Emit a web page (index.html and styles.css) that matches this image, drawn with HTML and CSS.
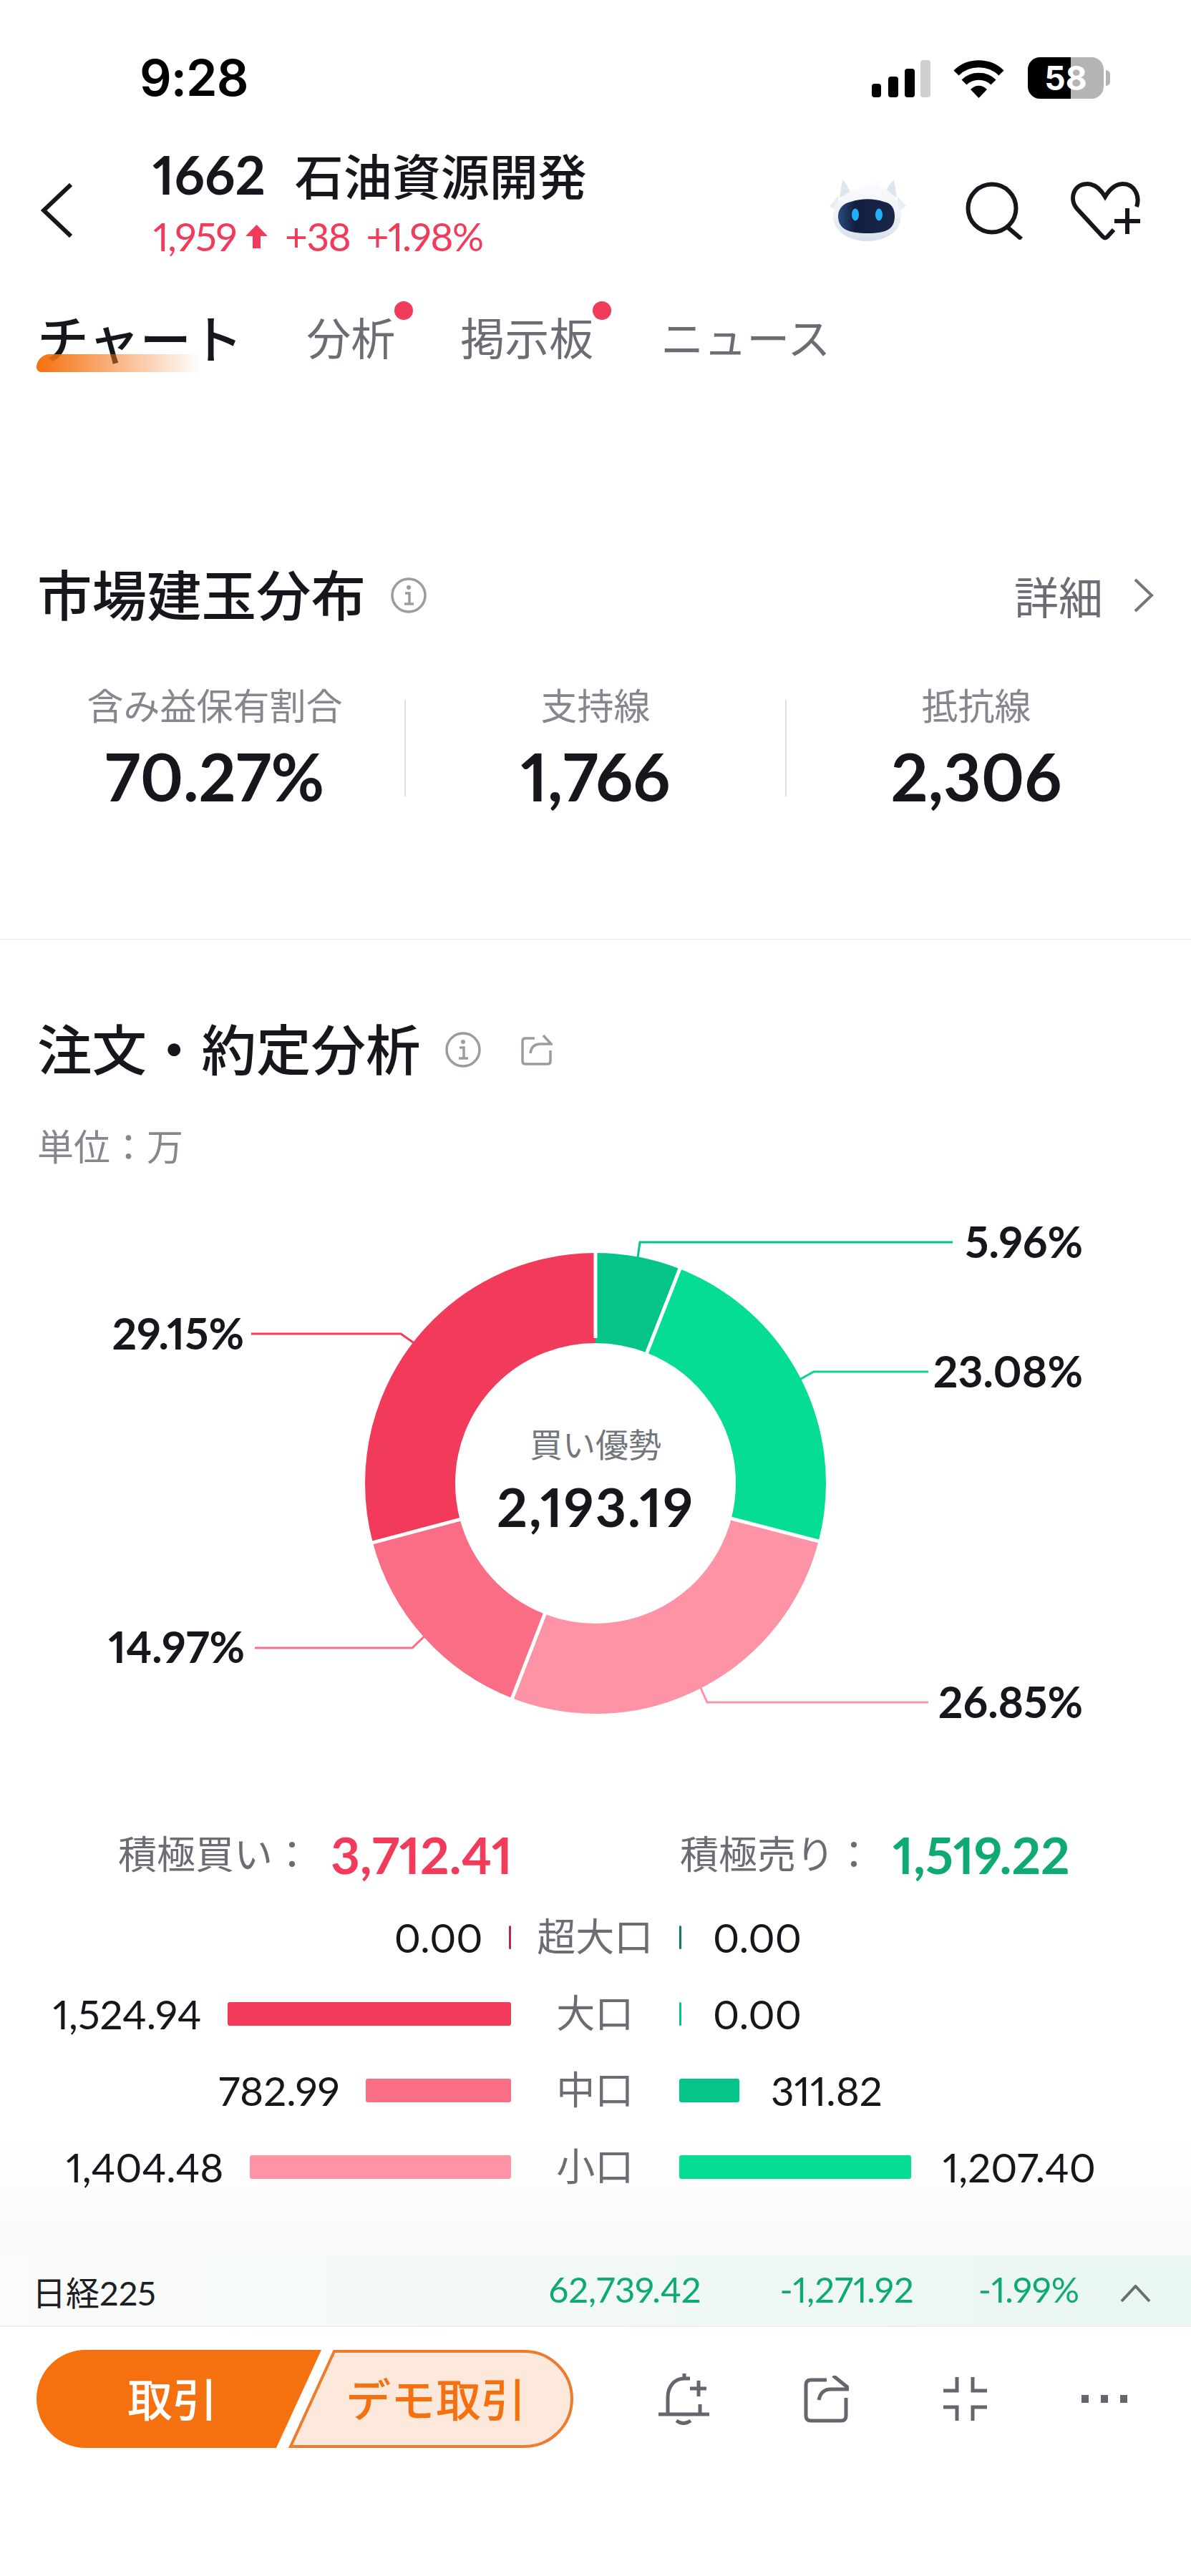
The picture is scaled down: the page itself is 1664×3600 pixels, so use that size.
FILE: index.html
```html
<!DOCTYPE html>
<html lang="ja">
<head>
<meta charset="utf-8">
<title>1662 石油資源開発</title>
<link rel="stylesheet" href="styles.css">
</head>
<body>
<div class="page">
  <header class="status">
    <div class="time">9:28</div>
    <div class="status-icons">
      <svg class="sig" width="82" height="52" viewBox="0 0 82 52"><rect x="0" y="33" width="13" height="19" rx="4"/><rect x="23" y="23" width="14" height="29" rx="4"/><rect x="46" y="12" width="14" height="40" rx="4"/><rect class="sig-off" x="68" y="0" width="14" height="52" rx="4"/></svg>
      <svg class="wifi" width="71" height="53" viewBox="0 0 71 53"><path class="wifi-arc" d="M4 18C21 1 50 1 67 18"/><path class="wifi-arc" d="M15 31C26 20 45 20 56 31"/><path d="M24 41C31 34 40 34 47 41L35.5 53Z"/></svg>
      <div class="battery">58</div>
      <div class="battery-cap"></div>
    </div>
  </header>

  <nav class="nav">
    <svg class="back" width="44" height="76" viewBox="0 0 44 76"><path d="M42 2L4 38L42 74"/></svg>
    <div class="name">
      <div class="name-line"><span class="code">1662</span><span class="cname">石油資源開発</span></div>
      <div class="price-line"><span>1,959</span><svg class="up" width="31" height="33" viewBox="0 0 31 33"><path d="M15.5 0L31 16H21V33H10V16H0Z"/></svg><span class="chg">+38</span><span class="pct">+1.98%</span></div>
    </div>
    <svg class="robot" width="107" height="89" viewBox="0 0 107 89">
      <defs>
        <linearGradient id="rb" x1="0" y1="0" x2="0" y2="1"><stop offset="0" stop-color="#fdfdff"/><stop offset="0.6" stop-color="#eef1f6"/><stop offset="1" stop-color="#d6dfeb"/></linearGradient>
        <linearGradient id="rv" x1="0" y1="0" x2="1" y2="0"><stop offset="0" stop-color="#2b4a7e"/><stop offset="0.3" stop-color="#131f3f"/><stop offset="1" stop-color="#1a2648"/></linearGradient>
      </defs>
      <path fill="#dfe5ee" d="M14 28L18 3C23 8 27 14 29 22ZM78 22C80 14 85 8 90 3L94 28Z"/>
      <path fill="#e8ecf3" d="M12 26L0 40L12 48ZM95 26L107 40L95 48Z"/>
      <path fill="url(#rb)" d="M53 12C58 10 66 6 74 0C72 4 72 8 70 12C84 18 98 30 100 52C101 74 80 89 53 89C26 89 4 74 5 52C7 30 28 16 53 12Z"/>
      <path fill="url(#rv)" d="M30 34C44 29 62 29 76 34C87 36 91 44 91 54C91 72 80 78 53 78C26 78 12 72 12 54C12 44 19 36 30 34Z"/>
      <ellipse cx="36" cy="52" rx="5" ry="8.5" fill="#21b0f5"/>
      <ellipse cx="69" cy="52" rx="5" ry="8.5" fill="#21b0f5"/>
    </svg>
    <svg class="search" width="80" height="81" viewBox="0 0 80 81"><circle cx="37" cy="37" r="33.5"/><path d="M58 63L78 80"/></svg>
    <svg class="heart" width="96" height="80" viewBox="0 0 96 80"><path d="M59 67L50 77C48 79 46 79 44 77L8 38C-4 24 3 3 22 3C33 3 41 11 47 21C53 11 61 3 72 3C88 3 96 20 91 35"/><path d="M60 55H96M78 37V73"/></svg>
  </nav>

  <div class="tabs">
    <div class="tab active">チャート</div>
    <div class="tab dot t2">分析</div>
    <div class="tab dot t3">掲示板</div>
    <div class="tab t4">ニュース</div>
  </div>

  <section class="market">
    <div class="title-row">
      <h2 class="title">市場建玉分布</h2>
      <svg class="info" width="52" height="52" viewBox="0 0 52 52"><circle cx="26" cy="26" r="23"/><circle class="i-dot" cx="26" cy="15" r="3"/><path d="M21 23H27V37M20 38H33"/></svg>
      <div class="detail">詳細<svg class="detail-arrow" width="30" height="50" viewBox="0 0 30 50"><path d="M3 3L26 25L3 47"/></svg></div>
    </div>
    <div class="stats">
      <div class="stat"><div class="stat-label">含み益保有割合</div><div class="stat-value">70.27%</div></div>
      <div class="vline"></div>
      <div class="stat"><div class="stat-label">支持線</div><div class="stat-value">1,766</div></div>
      <div class="vline"></div>
      <div class="stat"><div class="stat-label">抵抗線</div><div class="stat-value">2,306</div></div>
    </div>
  </section>

  <section class="orders">
    <div class="title-row title-row2">
      <h2 class="title">注文・約定分析</h2>
      <svg class="info info2" width="52" height="52" viewBox="0 0 52 52"><circle cx="26" cy="26" r="23"/><circle class="i-dot" cx="26" cy="15" r="3"/><path d="M21 23H27V37M20 38H33"/></svg>
      <svg class="share-small" width="44" height="44" viewBox="0 0 44 44"><path d="M19 6H6Q2 6 2 10V38Q2 42 6 42H37Q41 42 41 38V23"/><path d="M13 27Q14 15 26 14H42L31 2"/></svg>
    </div>
    <div class="unit">単位：万</div>
    <svg class="chart" width="1664" height="740" viewBox="0 1700 1664 740">
      <path class="lead" stroke="#05c48a" d="M890 1765L894 1736H1331"/>
      <path class="lead" stroke="#05d591" d="M1110 1932L1137 1917H1297"/>
      <path class="lead" stroke="#fd93a5" d="M975 2350L988 2379H1297"/>
      <path class="lead" stroke="#f23b5a" d="M590 1885L560 1864H351"/>
      <path class="lead" stroke="#f96d85" d="M600 2280L576 2303H356"/>
      <g class="ring">
        <circle stroke="#05c48a" pathLength="100" stroke-dasharray="5.96 94.04" stroke-dashoffset="0" cx="832" cy="2073" r="259"/>
        <circle stroke="#05dc94" pathLength="100" stroke-dasharray="23.08 76.92" stroke-dashoffset="-5.96" cx="832" cy="2073" r="259"/>
        <circle stroke="#fd93a5" pathLength="100" stroke-dasharray="26.85 73.15" stroke-dashoffset="-29.04" cx="832" cy="2073" r="259"/>
        <circle stroke="#f96d85" pathLength="100" stroke-dasharray="14.97 85.03" stroke-dashoffset="-55.89" cx="832" cy="2073" r="259"/>
        <circle stroke="#f23b5a" pathLength="100" stroke-dasharray="29.14 70.86" stroke-dashoffset="-70.86" cx="832" cy="2073" r="259"/>
      </g>
      <path class="seams" d="M832 1870V1745M901.5 1896.2L952 1767.7M1015.9 2120.7L1149.5 2155.3M763.3 2250.1L713.4 2378.8M648.4 2121.8L515 2157.3"/>
      <text class="pct-label" x="1513" y="1758" text-anchor="end">5.96%</text>
      <text class="pct-label" x="1513" y="1939" text-anchor="end">23.08%</text>
      <text class="pct-label" x="1513" y="2401" text-anchor="end">26.85%</text>
      <text class="pct-label" x="341" y="1886" text-anchor="end">29.15%</text>
      <text class="pct-label" x="342" y="2324" text-anchor="end">14.97%</text>
      <text class="c-label" x="832" y="2036" text-anchor="middle">買い優勢</text>
      <text class="c-value" x="832" y="2134" text-anchor="middle">2,193.19</text>
    </svg>

    <div class="summary">
      <div class="sum sum-buy"><span class="sum-label">積極買い：</span><span class="sum-value">3,712.41</span></div>
      <div class="sum sum-sell"><span class="sum-label">積極売り：</span><span class="sum-value">1,519.22</span></div>
    </div>

    <div class="rows">
      <div class="row">
        <div class="side left"><span class="num">0.00</span><i class="bar b-red0" style="width:3px"></i></div>
        <div class="row-label">超大口</div>
        <div class="side right"><i class="bar b-green0" style="width:3px"></i><span class="num">0.00</span></div>
      </div>
      <div class="row">
        <div class="side left"><span class="num">1,524.94</span><i class="bar b-red1" style="width:396px"></i></div>
        <div class="row-label">大口</div>
        <div class="side right"><i class="bar b-green1" style="width:3px"></i><span class="num">0.00</span></div>
      </div>
      <div class="row">
        <div class="side left"><span class="num">782.99</span><i class="bar b-red2" style="width:203px"></i></div>
        <div class="row-label">中口</div>
        <div class="side right"><i class="bar b-green1" style="width:84px"></i><span class="num">311.82</span></div>
      </div>
      <div class="row">
        <div class="side left"><span class="num">1,404.48</span><i class="bar b-red3" style="width:365px"></i></div>
        <div class="row-label">小口</div>
        <div class="side right"><i class="bar b-green2" style="width:324px"></i><span class="num">1,207.40</span></div>
      </div>
    </div>
  </section>

  <div class="ticker">
    <div class="t-name">日経225</div>
    <div class="t-vals"><span>62,739.42</span><span class="t-chg">-1,271.92</span><span class="t-pct">-1.99%</span></div>
    <svg class="t-arrow" width="43" height="24" viewBox="0 0 43 24"><path d="M2 23L21.5 2L41 23"/></svg>
  </div>

  <footer class="toolbar">
    <div class="trade">
      <svg class="trade-bg" width="750" height="137" viewBox="0 0 750 137"><path class="tb-l" d="M68.5 0H398L335 137H68.5A68.5 68.5 0 0 1 68.5 0Z"/><path class="tb-r" d="M416 2H681.500A66.500 66.500 0 0 1 681.500 135H355Z"/></svg>
      <span class="trade-main">取引</span>
      <span class="trade-demo">デモ取引</span>
    </div>
    <div class="tools">
      <svg width="71" height="72" viewBox="0 0 71 72"><path d="M36 0V7M44 7H36C21 7 13 20 13 33V56M58 43V56M0 57H71M25 66Q35 73 45 66"/><path d="M44 21H67M56 10V32"/></svg>
      <svg width="63" height="66" viewBox="0 0 63 66"><path d="M32 6H10Q3 6 3 13V56Q3 63 10 63H52Q59 63 59 56V31"/><path d="M21 34Q24 19 38 19H62V17L41 0"/></svg>
      <svg width="61" height="61" viewBox="0 0 61 61"><path d="M19 0V19H0M41 0V19H61M0 42H19V61M61 42H41V61"/></svg>
      <svg class="dots" width="64" height="11" viewBox="0 0 64 11"><rect width="10" height="11"/><rect x="27" width="10" height="11"/><rect x="54" width="10" height="11"/></svg>
    </div>
  </footer>
</div>
</body>
</html>
```

FILE: styles.css
```css
* { box-sizing: border-box; }
html, body { margin: 0; padding: 0; background: #fff; }
body { font-family: Lato, "Noto Sans CJK JP", sans-serif; color: #15171c; font-variant-numeric: proportional-nums; }
.page { width: 1664px; height: 3600px; overflow: hidden; background: #fff; }

/* status bar */
.status { height: 190px; padding-top: 80px; display: flex; align-items: flex-start; }
.time { margin-left: 195px; font-family: Inter, sans-serif; font-weight: 600; font-size: 70px; line-height: 58px; letter-spacing: -1px; color: #000; }
.status-icons { margin-left: auto; padding-right: 113px; display: flex; align-items: flex-start; }
.sig { margin-top: 4px; }
.sig rect { fill: #000; }
.sig .sig-off { fill: #cfcfcf; }
.wifi { margin: 4px 0 0 32px; }
.wifi-arc { fill: none; stroke: #000; stroke-width: 10; }
.battery { margin-left: 33px; width: 106px; height: 58px; border-radius: 17px; background: linear-gradient(90deg, #000 0 57%, #b4b4b4 57% 100%); color: #fff; font-family: Inter, sans-serif; font-weight: 700; font-size: 46px; line-height: 58px; text-align: center; }
.battery-cap { width: 6px; height: 22px; margin: 18px 0 0 3px; background: #b4b4b4; border-radius: 0 6px 6px 0; }

/* nav */
.nav { height: 190px; display: flex; align-items: flex-start; }
.back { margin: 66px 0 0 57px; flex: none; }
.back path { fill: none; stroke: #15171c; stroke-width: 6; }
.name { margin: 17px 0 0 112px; }
.name-line { display: flex; align-items: center; height: 72px; }
.code { font-weight: 700; font-size: 74px; }
.cname { margin-left: 41px; font-size: 68px; font-weight: 500; }
.price-line { display: flex; align-items: center; height: 52px; margin-top: 25px; color: #f23b5a; font-size: 55px; font-weight: 400; letter-spacing: -1.5px; padding-left: 1px; }
.up { margin-left: 13px; }
.up path { fill: #f23b5a; }
.chg { margin-left: 24px; }
.pct { margin-left: 22px; }
.robot { margin: 58px 0 0 auto; flex: none; }
.search { margin: 64px 0 0 83px; flex: none; }
.search circle, .search path { fill: none; stroke: #15171c; stroke-width: 6; }
.heart { margin: 64px 71px 0 68px; flex: none; overflow: visible; }
.heart path { fill: none; stroke: #15171c; stroke-width: 6; }

/* tabs */
.tabs { margin-top: 40px; height: 106px; padding-left: 52px; display: flex; }
.tab { position: relative; font-size: 62px; line-height: 106px; color: #6b6d75; }
.tab.active { font-size: 72px; font-weight: 500; color: #15171c; }
.tab.active::before { content: ""; position: absolute; z-index: 0; left: -1px; bottom: 6px; width: 230px; height: 25px; border-radius: 20px 0 0 7px; background: linear-gradient(90deg, #f5700f, rgba(245, 112, 15, 0)); }
.tab.dot::after { content: ""; position: absolute; top: 1px; right: -25px; width: 26px; height: 26px; border-radius: 50%; background: #f23b5a; }
.t2 { margin-left: 89px; }
.t3 { margin-left: 91px; }
.t4 { margin-left: 94px; font-size: 60px; }

/* market */
.market { margin-top: 266px; height: 521px; border-bottom: 1px solid #ececee; }
.title-row { height: 80px; padding: 0 51px 0 52px; display: flex; align-items: center; }
.title { margin: 0; font-size: 76.5px; font-weight: 500; line-height: 80px; color: #15171c; position: relative; top: -1px; }
.info { margin-left: 34px; flex: none; }
.info circle { fill: none; stroke: #9a9ca3; stroke-width: 3.5; }
.info path { fill: none; stroke: #9a9ca3; stroke-width: 3.5; }
.info .i-dot { fill: #9a9ca3; stroke: none; }
.detail { margin-left: auto; display: flex; align-items: center; font-size: 62px; color: #6b6d75; }
.detail-arrow { margin-left: 42px; }
.detail-arrow path { fill: none; stroke: #74767d; stroke-width: 4; }
.stats { margin-top: 88px; padding: 0 35px; display: flex; align-items: center; }
.stat { flex: 1; text-align: center; }
.stat-label { font-size: 51px; line-height: 54px; color: #85878e; }
.stat-value { margin-top: 26px; font-size: 91px; font-weight: 700; line-height: 90px; color: #15171c; }
.vline { width: 2px; height: 135px; background: #dfe0e3; flex: none; }

/* orders */
.orders { height: 1839px; padding-top: 114px; background: linear-gradient(180deg, #fff 90%, #f9f9fa 100%); }
.title-row2 { padding-right: 0; }
.info2 { margin-left: 33px; }
.share-small { margin-left: 55px; flex: none; }
.share-small path { fill: none; stroke: #9a9ca3; stroke-width: 3.5; }
.unit { margin-top: 66px; padding-left: 52px; height: 60px; font-size: 51px; line-height: 60px; color: #85878e; }
.chart { display: block; margin-top: 67px; overflow: visible; }
.lead { fill: none; stroke-width: 3; }
.ring circle { fill: none; stroke-width: 126; transform: rotate(-90deg); transform-origin: 832px 2073px; }
.seams { fill: none; stroke: #fff; stroke-width: 5; }
.pct-label { font-family: Lato, sans-serif; font-weight: 700; font-size: 60.5px; fill: #15171c; }
.c-label { font-family: "Noto Sans CJK JP", sans-serif; font-size: 46px; fill: #74767d; }
.c-value { font-family: Lato, sans-serif; font-weight: 700; font-size: 75px; letter-spacing: 2px; fill: #15171c; }

.summary { margin-top: 112px; height: 80px; padding-left: 165px; display: flex; align-items: center; }
.sum { display: flex; align-items: center; }
.sum-label { font-size: 54px; color: #6b6d75; width: 297px; line-height: 80px; }
.sum-value { font-size: 71px; font-weight: 700; line-height: 80px; width: 246px; white-space: nowrap; }
.sum-buy .sum-value { color: #f23b5a; }
.sum-sell { margin-left: 242px; }
.sum-sell .sum-value { color: #0eaa72; }

.rows { margin-top: 21.5px; }
.row { height: 107px; display: grid; grid-template-columns: 713.5px 235.5px 1fr; align-items: center; }
.side { display: flex; align-items: center; gap: 36px; }
.side.left { justify-content: flex-end; }
.num { font-size: 56.5px; font-weight: 400; color: #15171c; line-height: 60px; }
.bar { display: block; height: 33px; border-radius: 3px; flex: none; }
.side.right .bar + .num { margin-left: 8px; }
.row-label { text-align: center; font-size: 54px; color: #6b6d75; line-height: 60px; }
.b-red0 { background: #c2274b; }
.b-red1 { background: #f23b5a; }
.b-red2 { background: #f96d85; }
.b-red3 { background: #fd93a5; }
.b-green0 { background: #087f5b; }
.b-green1 { background: #05c48a; }
.b-green2 { background: #05dc94; }

/* ticker */
.ticker { height: 100px; padding: 0 56px 0 45px; display: flex; align-items: center; background: linear-gradient(90deg, #fafbfb, #e9f6f2); border-bottom: 2px solid #eeeff0; }
.t-name { font-size: 47px; color: #1d1f24; }
.t-vals { margin-left: auto; display: flex; color: #0eaa72; font-size: 49px; position: relative; top: -2px; }
.t-chg { margin-left: 110px; }
.t-pct { margin-left: 90px; }
.t-arrow { margin-left: 57px; margin-top: 8px; }
.t-arrow path { fill: none; stroke: #6b6d75; stroke-width: 4; }

/* toolbar */
.toolbar { padding-top: 32px; display: flex; }
.trade { position: relative; margin-left: 51px; width: 750px; height: 137px; display: flex; align-items: center; flex: none; }
.trade-bg { position: absolute; left: 0; top: 0; }
.tb-l { fill: #f5700f; }
.tb-r { fill: #fde8dc; stroke: #ee7a2c; stroke-width: 4; }
.trade-main, .trade-demo { position: relative; font-size: 63px; font-weight: 500; text-align: center; line-height: 137px; }
.trade-main { width: 380px; color: #fff; }
.trade-demo { width: 356px; color: #f5700f; }
.tools { margin-left: 119px; height: 137px; display: flex; align-items: center; }
.tools svg { flex: none; margin-right: 132px; }
.tools svg path { fill: none; stroke: #65666d; stroke-width: 5; }
.tools svg.dots { margin: 0; }
.dots rect { fill: #65666d; }
```
